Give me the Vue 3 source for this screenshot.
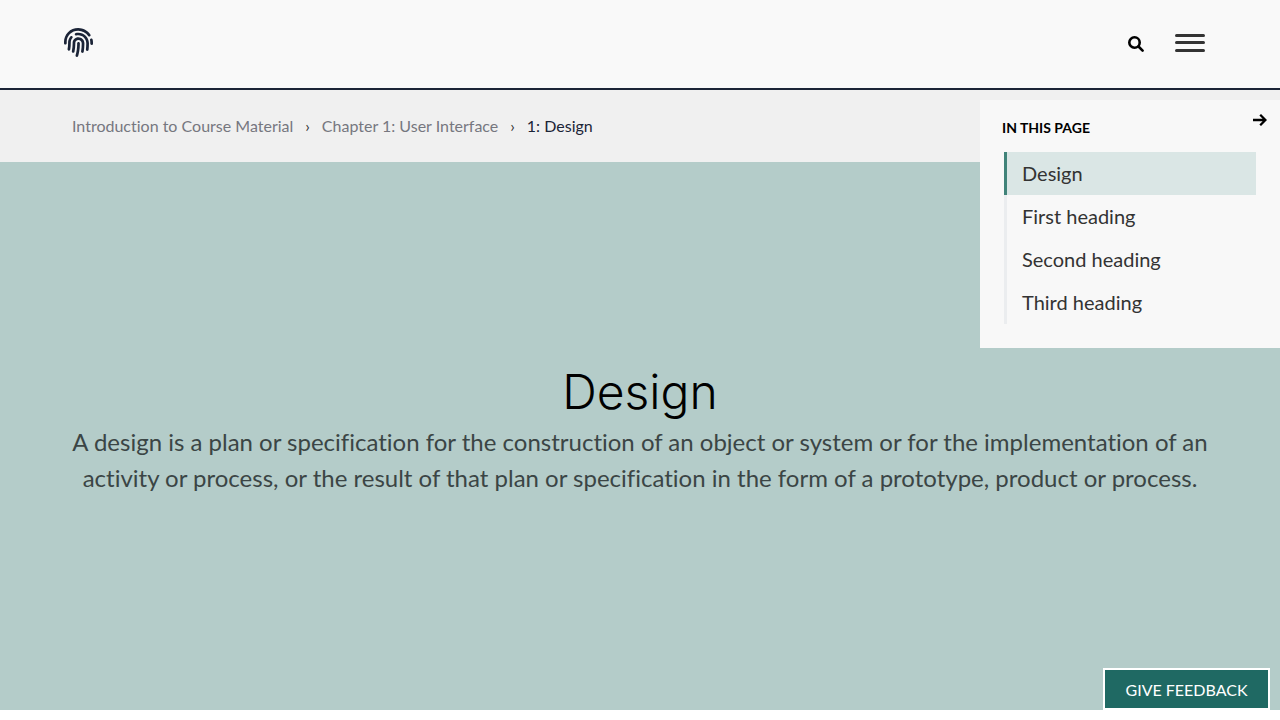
<script setup>
import { ref } from 'vue'

const crumbs = ['Introduction to Course Material', 'Chapter 1: User Interface']
const headings = ['Design', 'First heading', 'Second heading', 'Third heading']
const active = ref(0)
</script>

<template>
  <div class="page">
    <header class="topbar">
      <a href="#" class="logo" aria-label="Home">
        <svg viewBox="0 0 512 512" aria-hidden="true">
          <path d="M256.12 245.96c-13.25 0-24 10.74-24 24 1.14 72.25-8.14 141.9-27.7 211.55-2.73 9.72 2.15 30.49 23.12 30.49 10.48 0 20.11-6.92 23.09-17.52 13.53-47.91 31.04-125.41 29.48-224.52.01-13.25-10.73-24-23.99-24zm-.86-81.73C194 164.16 151.25 211.3 152.1 265.32c.75 47.94-3.75 95.91-13.37 142.55-2.69 12.98 5.67 25.69 18.64 28.36 13.05 2.67 25.67-5.66 28.36-18.64 10.34-50.09 15.17-101.58 14.37-153.02-.41-25.95 19.92-52.49 54.45-52.34 31.31.47 57.15 25.34 57.62 55.47.77 48.05-2.81 96.33-10.61 143.55-2.17 13.06 6.69 25.42 19.76 27.58 19.97 3.33 26.81-15.1 27.58-19.77 8.28-50.03 12.06-101.21 11.27-152.11-.88-55.8-47.94-101.88-104.91-102.72zm-110.69-19.78c-10.3-8.34-25.37-6.8-33.76 3.48-25.62 31.5-39.39 71.28-38.75 112 .59 37.58-2.47 75.27-9.11 112.05-2.34 13.05 6.31 25.53 19.36 27.89 20.11 3.5 27.07-14.81 27.89-19.36 7.19-39.84 10.5-80.66 9.86-121.33-.47-29.88 9.2-57.88 28-80.97 8.35-10.28 6.79-25.39-3.49-33.76zm109.47-62.33c-15.41-.41-30.87 1.44-45.78 4.97-12.89 3.06-20.87 15.98-17.83 28.89 3.06 12.89 16 20.83 28.89 17.83 11.05-2.61 22.47-3.77 34-3.69 75.43 1.13 137.73 61.5 138.88 134.58.59 37.88-1.28 76.11-5.58 113.63-1.5 13.17 7.95 25.08 21.11 26.58 16.72 1.95 25.51-11.88 26.58-21.11a929.06 929.06 0 0 0 5.89-119.85c-1.56-98.75-85.07-180.33-186.16-181.83zm252.07 121.45c-2.86-12.92-15.51-21.2-28.61-18.27-12.94 2.86-21.12 15.66-18.26 28.61 4.71 21.41 4.91 37.41 4.7 61.6-.11 13.27 10.55 24.09 23.8 24.2h.2c13.17 0 23.89-10.61 24-23.8.18-22.18.4-44.11-5.83-72.34zm-40.12-90.72C417.29 43.46 337.6 1.29 252.81.02 183.02-.82 118.47 24.91 70.46 72.94 24.09 119.37-.9 181.04.14 246.65l-.12 21.47c-.39 13.25 10.03 24.31 23.28 24.69.23.02.48.02.72.02 12.92 0 23.59-10.3 23.97-23.3l.16-23.64c-.83-52.5 19.16-101.86 56.28-139 38.76-38.8 91.34-59.67 147.68-58.86 69.45 1.03 134.73 35.56 174.62 92.39 7.61 10.86 22.56 13.45 33.42 5.86 10.84-7.62 13.46-22.59 5.84-33.43z" />
        </svg>
      </a>
      <div class="actions">
        <button type="button" class="icon-button search" aria-label="Search">
          <svg viewBox="0 0 16 16" aria-hidden="true">
            <circle cx="6.5" cy="6.5" r="5.2" />
            <path d="M10.5 10.5 14.6 14.6" />
          </svg>
        </button>
        <button type="button" class="icon-button menu" aria-label="Menu">
          <svg viewBox="0 0 30 18" aria-hidden="true">
            <rect width="30" height="3" rx="1.5" />
            <rect y="7" width="30" height="3" rx="1.5" />
            <rect y="15" width="30" height="3" rx="1.5" />
          </svg>
        </button>
      </div>
    </header>

    <nav class="breadcrumb" aria-label="Breadcrumb">
      <template v-for="crumb in crumbs" :key="crumb">
        <a href="#">{{ crumb }}</a>
        <span class="separator" aria-hidden="true">›</span>
      </template>
      <a href="#" class="current" aria-current="page">1: Design</a>
    </nav>

    <main class="hero">
      <h1>Design</h1>
      <p>
        A design is a plan or specification for the construction of an object or system or for the
        implementation of an activity or process, or the result of that plan or specification in the
        form of a prototype, product or process.
      </p>
    </main>

    <aside class="contents">
      <div class="contents-head">
        <h2>IN THIS PAGE</h2>
        <button type="button" class="icon-button collapse" aria-label="Collapse contents">
          <svg viewBox="0 0 14 12" aria-hidden="true">
            <path d="M0 6H12.5M7.2 .8 12.4 6 7.2 11.2" />
          </svg>
        </button>
      </div>
      <ul>
        <li v-for="(heading, i) in headings" :key="heading">
          <a href="#" :class="{ active: i === active }" @click.prevent="active = i">{{ heading }}</a>
        </li>
      </ul>
    </aside>

    <button type="button" class="feedback">GIVE FEEDBACK</button>
  </div>
</template>

<style>
body {
  background: #fff;
}
</style>

<style scoped>
.page {
  display: flex;
  flex-direction: column;
  box-sizing: border-box;
  min-height: calc(100vh - 10px);
  font-family: Lato, "Open Sans", sans-serif;
  font-variant-ligatures: none;
  color: #333;
}

a {
  color: inherit;
  text-decoration: none;
}

svg {
  display: block;
}

.topbar {
  display: flex;
  justify-content: space-between;
  align-items: center;
  height: 88px;
  padding: 0 75px 0 64px;
  background: #f9f9f9;
  border-bottom: 2px solid #1b2437;
}

.logo svg {
  width: 29px;
  height: 29px;
  margin-bottom: 3px;
  fill: #1b2437;
}

.actions {
  display: flex;
  align-items: center;
  gap: 31px;
}

.icon-button {
  padding: 0;
  border: 0;
  background: none;
  cursor: pointer;
}

.search svg {
  width: 16px;
  height: 16px;
  fill: none;
  stroke: #000;
  stroke-width: 2.6;
  stroke-linecap: round;
}

.menu svg {
  width: 30px;
  height: 18px;
  margin-bottom: 2px;
  fill: #333;
}

.breadcrumb {
  display: flex;
  align-items: center;
  gap: 12px;
  height: 72px;
  padding: 0 72px;
  background: #f0f0f0;
  font-size: 16px;
  line-height: 24px;
  color: #76777f;
}

.separator {
  color: #333;
}

.current {
  color: #1b2437;
}

.hero {
  flex: 1;
  display: flex;
  flex-direction: column;
  align-items: center;
  justify-content: center;
  padding: 0 64px 12px;
  background: #b4ccc9;
  text-align: center;
}

h1 {
  margin: 0;
  font-family: Inter, Lato, sans-serif;
  font-size: 48px;
  font-weight: 300;
  line-height: 56px;
  color: #000;
}

.hero p {
  margin: 4px 0 0;
  font-size: 24px;
  line-height: 36px;
  color: #3b4545;
}

.contents {
  position: absolute;
  top: 100px;
  right: 0;
  box-sizing: border-box;
  width: 300px;
  padding: 12px 24px 24px;
  background: #f8f8f8;
}

.contents-head {
  display: flex;
  justify-content: space-between;
  margin: 0 -11px 8px -2px;
}

.contents h2 {
  margin: 0;
  font-size: 14px;
  font-weight: 700;
  line-height: 32px;
  color: #000;
}

.collapse {
  align-self: flex-start;
  padding: 2px 0;
}

.collapse svg {
  width: 14px;
  height: 12px;
  fill: none;
  stroke: #000;
  stroke-width: 2.3;
}

.contents ul {
  margin: 0;
  padding: 0;
  list-style: none;
}

.contents li a {
  display: block;
  padding: 0 15px;
  border-left: 3px solid #ebedef;
  font-size: 20px;
  line-height: 43px;
}

.contents li a.active {
  border-color: #408379;
  background: #dae6e5;
}

.feedback {
  position: absolute;
  right: 10px;
  bottom: 10px;
  min-width: 167px;
  height: 42px;
  padding: 0 18px;
  border: 2px solid #fff;
  background: #1f6963;
  color: #fff;
  font: 16px Lato, "Open Sans", sans-serif;
  cursor: pointer;
}
</style>
